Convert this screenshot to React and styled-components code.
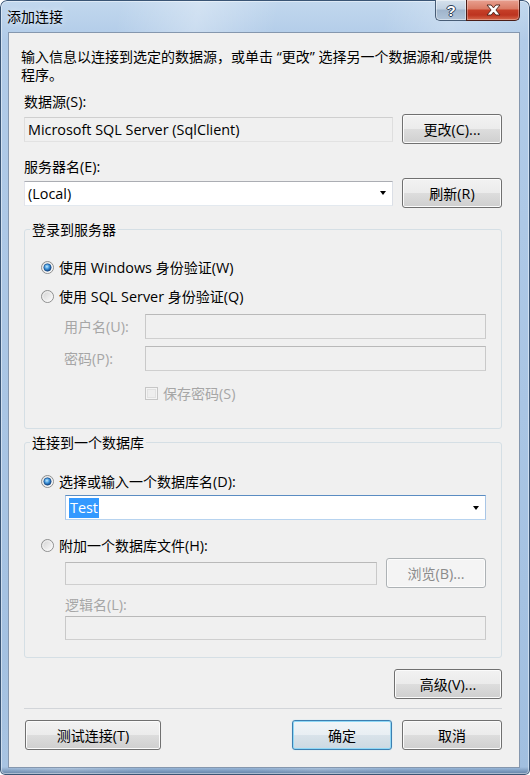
import React, { useId } from 'react';
import styled, { createGlobalStyle } from 'styled-components';

const Global = createGlobalStyle`
  html, body { margin: 0; padding: 0; background: #fff; }
  body {
    font-family: "Noto Sans CJK SC", "Noto Sans CJK JP", sans-serif;
    font-size: 14px;
    color: #000;
  }
  * { box-sizing: border-box; }
`;

const LatinRun = styled.span`
  font-family: "Open Sans", "Noto Sans", sans-serif;
  font-size: 14.4px;
`;

const CJK_ONLY = /^[\u2e80-\u9fff\uf900-\ufaff\uff00-\uffef\u3000-\u303f]+$/;
const CJK_SPLIT = /([\u2e80-\u9fff\uf900-\ufaff\uff00-\uffef\u3000-\u303f]+)/;
function tx(str) {
  return str.split(CJK_SPLIT).map((p, i) => {
    if (!p) return null;
    if (CJK_ONLY.test(p)) return <React.Fragment key={i}>{p}</React.Fragment>;
    return <LatinRun key={i}>{p}</LatinRun>;
  });
}

/* ---------- window frame ---------- */

const Window = styled.div`
  width: 530px;
  height: 775px;
  display: flex;
  flex-direction: column;
  border-radius: 7px 7px 5px 5px;
  overflow: hidden;
  background:
    linear-gradient(to bottom, rgba(30, 60, 100, 0) 0, rgba(30, 60, 100, 0) 767px, rgba(40, 70, 110, 0.6) 775px),
    linear-gradient(100deg, rgba(255,255,255,0) 18%, rgba(255,255,255,.3) 30%, rgba(255,255,255,0) 42%, rgba(255,255,255,0) 58%, rgba(255,255,255,.22) 68%, rgba(255,255,255,0) 80%),
    linear-gradient(to bottom, #c2d8ee 0, #b1cbe8 40px, #a1bfe0 100%);
  box-shadow: inset 0 0 0 1px #3a5575, inset 0 0 0 2px rgba(255, 255, 255, 0.45);
`;

const TitleBar = styled.div`
  display: flex;
  height: 32px;
  flex-shrink: 0;
  padding: 0 10px 0 7px;
`;

const Title = styled.div`
  margin-top: 8px;
  line-height: 17px;
  white-space: nowrap;
  text-shadow: 0 0 6px rgba(255, 255, 255, 0.9);
`;

const CapButtons = styled.div`
  display: flex;
  margin-left: auto;
  align-self: flex-start;
`;

const HelpBtn = styled.div`
  width: 31px;
  height: 21px;
  border: 1px solid #485d76;
  border-top: none;
  border-right: none;
  border-radius: 0 0 0 5px;
  background: linear-gradient(#d6e1ec, #c0d0e1 45%, #9fb4cb 50%, #b0c4d9 100%);
  box-shadow: inset 0 0 0 1px rgba(255, 255, 255, 0.45);
  display: flex;
  align-items: center;
  justify-content: center;
  color: #fff;
  font: bold 15px "Liberation Sans", sans-serif;
  text-shadow: 1px 0 #2c3e56, -1px 0 #2c3e56, 0 1px #2c3e56, 0 -1px #2c3e56;
`;

const CloseBtn = styled.div`
  width: 54px;
  height: 21px;
  border: 1px solid #4a1d17;
  border-top: none;
  border-radius: 0 0 5px 0;
  background: linear-gradient(#e8a090, #da7a64 45%, #c63f28 50%, #bd3420 75%, #d6674a 100%);
  box-shadow: inset 0 0 0 1px rgba(255, 255, 255, 0.3);
  display: flex;
  align-items: center;
  justify-content: center;
`;

function CloseGlyph() {
  return (
    <svg width="15" height="12" viewBox="0 0 15 12">
      <path
        d="M1 1 H5.2 L7.5 3.9 L9.8 1 H14 L9.9 6 L14 11 H9.8 L7.5 8.1 L5.2 11 H1 L5.1 6 Z"
        fill="#fff"
        stroke="#45201a"
        strokeWidth="0.9"
        strokeLinejoin="round"
      />
    </svg>
  );
}

/* ---------- client area ---------- */

const Client = styled.div`
  flex: 1;
  margin: 0 10px 7px 8px;
  border: 1px solid #8597ae;
  background: #f0f0f0;
  display: flex;
  flex-direction: column;
  padding: 14px 17px 0 15px;
`;

const Desc = styled.div`
  margin-left: -3px;
`;

const Line = styled.div`
  line-height: 18px;
  height: 18px;
  white-space: nowrap;
`;

const Label = styled.div`
  line-height: 17px;
  height: 17px;
  white-space: nowrap;
  margin-top: ${p => p.$mt || 0}px;
  color: ${p => (p.$disabled ? '#a6a6a6' : '#000')};
  ${p => (p.$w ? `width: ${p.$w}px; flex-shrink: 0;` : '')}
`;

const Row = styled.div`
  display: flex;
  align-items: center;
  gap: ${p => (p.$gap === undefined ? 9 : p.$gap)}px;
  height: ${p => p.$h || 30}px;
  margin-top: ${p => p.$mt || 0}px;
`;

const boxStyles = {
  readonly: 'background:#f0f0f0; border-color:#cfcfcf #dedede #e2e2e2 #dedede;',
  normal: 'background:#fff; border-color:#abadb3 #dbdfe6 #e3e9ef #e2e3ea;',
  focus: 'background:#fff; border-color:#5a8cc2 #a9c6e6 #b7d3ef #a9c6e6;',
  disabled: 'background:#f0f0f0; border-color:#b9b9b9 #c9c9c9 #cfcfcf #c9c9c9;',
};

const TextBox = styled.div`
  flex: 1;
  height: ${p => p.$h || 25}px;
  border: 1px solid;
  ${p => boxStyles[p.$variant || 'normal']}
  display: flex;
  align-items: center;
  padding: 0 4px 0 3px;
  line-height: 17px;
  white-space: nowrap;
`;

const Arrow = styled.span`
  margin-left: auto;
  width: 0;
  height: 0;
  border-left: 3.5px solid transparent;
  border-right: 3.5px solid transparent;
  border-top: 4px solid #000;
  margin-right: 2px;
`;

const Selected = styled.span`
  background: #3399ff;
  color: #fff;
  padding: 1px 1px 2px;
`;

const Button = styled.button`
  flex: 0 0 ${p => p.$w}px;
  width: ${p => p.$w}px;
  height: 30px;
  margin: 0;
  padding: 0;
  font: inherit;
  line-height: 17px;
  border-radius: 3px;
  border: 1px solid #707070;
  color: #000;
  background: linear-gradient(#f2f2f2 0%, #ebebeb 50%, #dddddd 50%, #cfcfcf 100%);
  box-shadow: inset 0 0 0 1px #fbfbfb;
  white-space: nowrap;
  ${p =>
    p.$variant === 'default' &&
    `
    border-color: #3c7fb1;
    background: linear-gradient(#f1f5f8 0%, #e8eef3 50%, #d9e3ea 50%, #ccd9e2 100%);
    box-shadow: inset 0 0 0 1px #8fd8f6, 0 0 1px #8fd8f6;
  `}
  ${p =>
    p.$variant === 'disabled' &&
    `
    border-color: #adb2b5;
    background: #f4f4f4;
    color: #8b8b8b;
    box-shadow: inset 0 0 0 1px #fcfcfc;
  `}
`;

/* ---------- group boxes ---------- */

const Group = styled.fieldset`
  margin: ${p => p.$mt || 0}px 0 0 0;
  padding: 0;
  min-width: 0;
  border: 1px solid #d5dfe5;
  border-radius: 3px;
`;

const Legend = styled.legend`
  margin-left: 5px;
  padding: 0 2px;
  line-height: 17px;
  height: 17px;
  white-space: nowrap;
`;

const GroupBody = styled.div`
  display: flex;
  flex-direction: column;
  padding: ${p => p.$pt}px 15px ${p => p.$pb}px 16px;
`;

const Option = styled.div`
  display: flex;
  align-items: center;
  gap: 5px;
  height: 20px;
  margin-top: ${p => p.$mt || 0}px;
`;

const OptionText = styled.span`
  line-height: 17px;
  white-space: nowrap;
  color: ${p => (p.$disabled ? '#a6a6a6' : '#000')};
`;

const CheckRow = styled.div`
  display: flex;
  align-items: center;
  gap: 5px;
  height: 17px;
  margin: ${p => p.$mt || 0}px 0 0 ${p => p.$indent || 0}px;
`;

const Glyph = styled.svg`
  flex-shrink: 0;
  display: block;
`;

function Radio({ checked }) {
  const id = useId().replace(/[^a-zA-Z0-9_-]/g, '');
  return (
    <Glyph width="13" height="13" viewBox="0 0 13 13">
      <defs>
        <linearGradient id={`${id}r`} x1="0" y1="0" x2="1" y2="1">
          <stop offset="0" stopColor="#cfcfcf" />
          <stop offset="1" stopColor="#ffffff" />
        </linearGradient>
        <radialGradient id={`${id}d`} cx="0.42" cy="0.38" r="0.65">
          <stop offset="0" stopColor="#c4ecff" />
          <stop offset="0.5" stopColor="#3d93da" />
          <stop offset="1" stopColor="#0c3b78" />
        </radialGradient>
      </defs>
      <circle cx="6.5" cy="6.5" r="6" fill={`url(#${id}r)`} stroke="#8e8f8f" />
      <circle cx="6.5" cy="6.5" r="4.7" fill="none" stroke="#f6f6f6" strokeWidth="0.8" />
      {checked && <circle cx="6.5" cy="6.5" r="3.7" fill={`url(#${id}d)`} stroke="#1a4a84" strokeWidth="0.6" />}
    </Glyph>
  );
}

function CheckBox() {
  return (
    <Glyph width="13" height="13" viewBox="0 0 13 13">
      <rect x="0.5" y="0.5" width="12" height="12" fill="#f4f4f4" stroke="#c6c6c6" />
      <rect x="2.5" y="2.5" width="8" height="8" fill="#eeeeee" stroke="#e2e2e2" />
    </Glyph>
  );
}

const SubForm = styled.div`
  display: flex;
  flex-direction: column;
  margin-left: ${p => p.$indent}px;
`;

const Separator = styled.div`
  height: 1px;
  background: #d2d5d9;
  margin-top: ${p => p.$mt}px;
  flex-shrink: 0;
`;

const ButtonBar = styled.div`
  display: flex;
  justify-content: ${p => p.$justify || 'flex-end'};
  align-items: center;
  margin-top: ${p => p.$mt || 0}px;
  padding-left: ${p => p.$pl || 0}px;
`;

const ButtonGroup = styled.div`
  display: flex;
  gap: 10px;
`;

export default function App() {
  return (
    <>
      <Global />
      <Window>
        <TitleBar>
          <Title>{tx('添加连接')}</Title>
          <CapButtons>
            <HelpBtn>?</HelpBtn>
            <CloseBtn>
              <CloseGlyph />
            </CloseBtn>
          </CapButtons>
        </TitleBar>
        <Client>
          <Desc>
            <Line>{tx('输入信息以连接到选定的数据源，或单击 “更改” 选择另一个数据源和/或提供')}</Line>
            <Line>{tx('程序。')}</Line>
          </Desc>

          <Label $mt={10}>{tx('数据源(S):')}</Label>
          <Row $mt={4}>
            <TextBox $variant="readonly">{tx('Microsoft SQL Server (SqlClient)')}</TextBox>
            <Button $w={100}>{tx('更改(C)...')}</Button>
          </Row>

          <Label $mt={14}>{tx('服务器名(E):')}</Label>
          <Row $mt={3}>
            <TextBox $variant="normal">
              {tx('(Local)')}
              <Arrow />
            </TextBox>
            <Button $w={100}>{tx('刷新(R)')}</Button>
          </Row>

          <Group $mt={13}>
            <Legend>{tx('登录到服务器')}</Legend>
            <GroupBody $pt={19} $pb={26}>
              <Option>
                <Radio checked />
                <OptionText>{tx('使用 Windows 身份验证(W)')}</OptionText>
              </Option>
              <Option $mt={9}>
                <Radio />
                <OptionText>{tx('使用 SQL Server 身份验证(Q)')}</OptionText>
              </Option>
              <SubForm $indent={23}>
                <Row $h={25} $mt={8} $gap={0}>
                  <Label $disabled $w={81}>{tx('用户名(U):')}</Label>
                  <TextBox $variant="disabled" />
                </Row>
                <Row $h={25} $mt={7} $gap={0}>
                  <Label $disabled $w={81}>{tx('密码(P):')}</Label>
                  <TextBox $variant="disabled" />
                </Row>
                <CheckRow $mt={14} $indent={81}>
                  <CheckBox />
                  <OptionText $disabled>{tx('保存密码(S)')}</OptionText>
                </CheckRow>
              </SubForm>
            </GroupBody>
          </Group>

          <Group $mt={5}>
            <Legend>{tx('连接到一个数据库')}</Legend>
            <GroupBody $pt={20} $pb={17}>
              <Option>
                <Radio checked />
                <OptionText>{tx('选择或输入一个数据库名(D):')}</OptionText>
              </Option>
              <SubForm $indent={24}>
                <Row $h={25} $mt={4}>
                  <TextBox $variant="focus">
                    <Selected>{tx('Test')}</Selected>
                    <Arrow />
                  </TextBox>
                </Row>
              </SubForm>
              <Option $mt={15}>
                <Radio />
                <OptionText>{tx('附加一个数据库文件(H):')}</OptionText>
              </Option>
              <SubForm $indent={24}>
                <Row $mt={3}>
                  <TextBox $variant="disabled" $h={23} />
                  <Button $w={100} $variant="disabled">{tx('浏览(B)...')}</Button>
                </Row>
                <Label $disabled $mt={8}>{tx('逻辑名(L):')}</Label>
                <Row $h={24} $mt={3}>
                  <TextBox $variant="disabled" $h={24} />
                </Row>
              </SubForm>
            </GroupBody>
          </Group>

          <ButtonBar $mt={11}>
            <Button $w={108}>{tx('高级(V)...')}</Button>
          </ButtonBar>

          <Separator $mt={9} />

          <ButtonBar $mt={11} $justify="space-between" $pl={1}>
            <Button $w={136}>{tx('测试连接(T)')}</Button>
            <ButtonGroup>
              <Button $w={100} $variant="default">{tx('确定')}</Button>
              <Button $w={100}>{tx('取消')}</Button>
            </ButtonGroup>
          </ButtonBar>
        </Client>
      </Window>
    </>
  );
}
